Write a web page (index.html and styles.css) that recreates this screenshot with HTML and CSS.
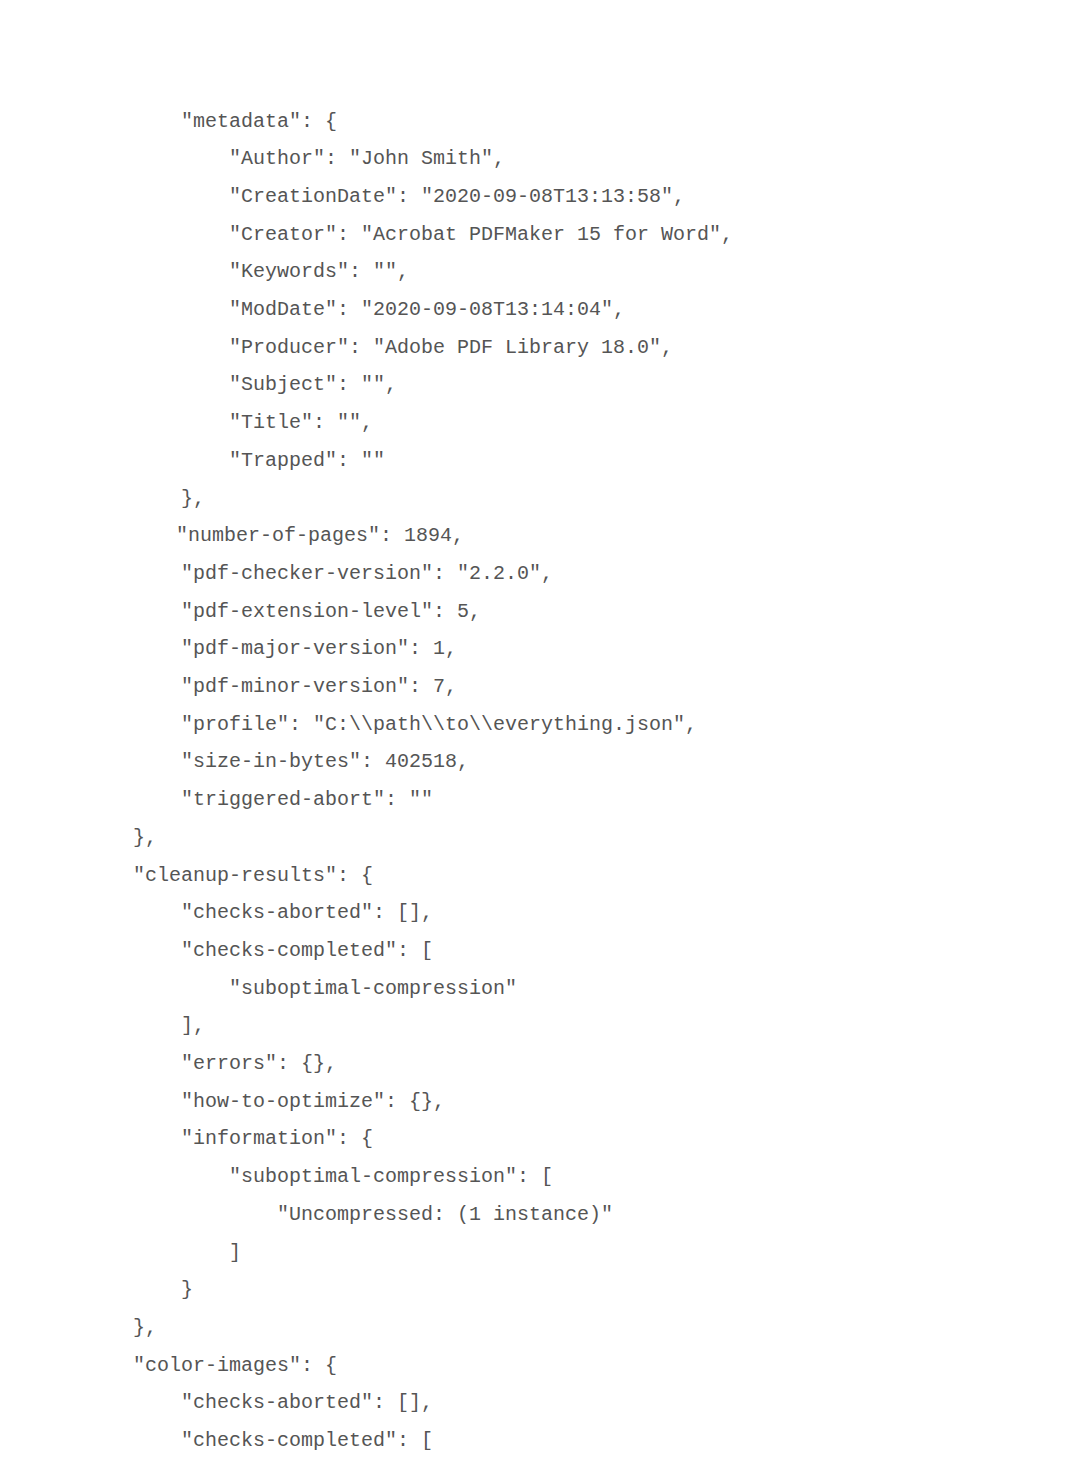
FILE: index.html
```html
<!DOCTYPE html>
<html>
<head>
<meta charset="utf-8">
<link rel="stylesheet" href="styles.css">
</head>
<body>
<div class="code">
<div class="ln i2">"metadata": {</div>
<div class="ln i3">"Author": "John Smith",</div>
<div class="ln i3">"CreationDate": "2020-09-08T13:13:58",</div>
<div class="ln i3">"Creator": "Acrobat PDFMaker 15 for Word",</div>
<div class="ln i3">"Keywords": "",</div>
<div class="ln i3">"ModDate": "2020-09-08T13:14:04",</div>
<div class="ln i3">"Producer": "Adobe PDF Library 18.0",</div>
<div class="ln i3">"Subject": "",</div>
<div class="ln i3">"Title": "",</div>
<div class="ln i3">"Trapped": ""</div>
<div class="ln i2">},</div>
<div class="ln i2 nudge">"number-of-pages": 1894,</div>
<div class="ln i2">"pdf-checker-version": "2.2.0",</div>
<div class="ln i2">"pdf-extension-level": 5,</div>
<div class="ln i2">"pdf-major-version": 1,</div>
<div class="ln i2">"pdf-minor-version": 7,</div>
<div class="ln i2">"profile": "C:\\path\\to\\everything.json",</div>
<div class="ln i2">"size-in-bytes": 402518,</div>
<div class="ln i2">"triggered-abort": ""</div>
<div class="ln i1">},</div>
<div class="ln i1">"cleanup-results": {</div>
<div class="ln i2">"checks-aborted": [],</div>
<div class="ln i2">"checks-completed": [</div>
<div class="ln i3">"suboptimal-compression"</div>
<div class="ln i2">],</div>
<div class="ln i2">"errors": {},</div>
<div class="ln i2">"how-to-optimize": {},</div>
<div class="ln i2">"information": {</div>
<div class="ln i3">"suboptimal-compression": [</div>
<div class="ln i4">"Uncompressed: (1 instance)"</div>
<div class="ln i3">]</div>
<div class="ln i2">}</div>
<div class="ln i1">},</div>
<div class="ln i1">"color-images": {</div>
<div class="ln i2">"checks-aborted": [],</div>
<div class="ln i2">"checks-completed": [</div>
</div>
</body>
</html>
```
FILE: styles.css
```css
html, body {
  margin: 0;
  padding: 0;
  background: #ffffff;
}
.code {
  padding: 102.5px 0 0 85px;
  font-family: "Liberation Mono", "DejaVu Sans Mono", monospace;
  font-size: 20px;
  line-height: 37.7px;
  color: #555555;
}
.ln {
  display: block;
  white-space: pre;
}
.i1 { padding-left: 48px; }
.i2 { padding-left: 96px; }
.i3 { padding-left: 144px; }
.i4 { padding-left: 192px; }
.nudge { margin-left: -5px; }
```
